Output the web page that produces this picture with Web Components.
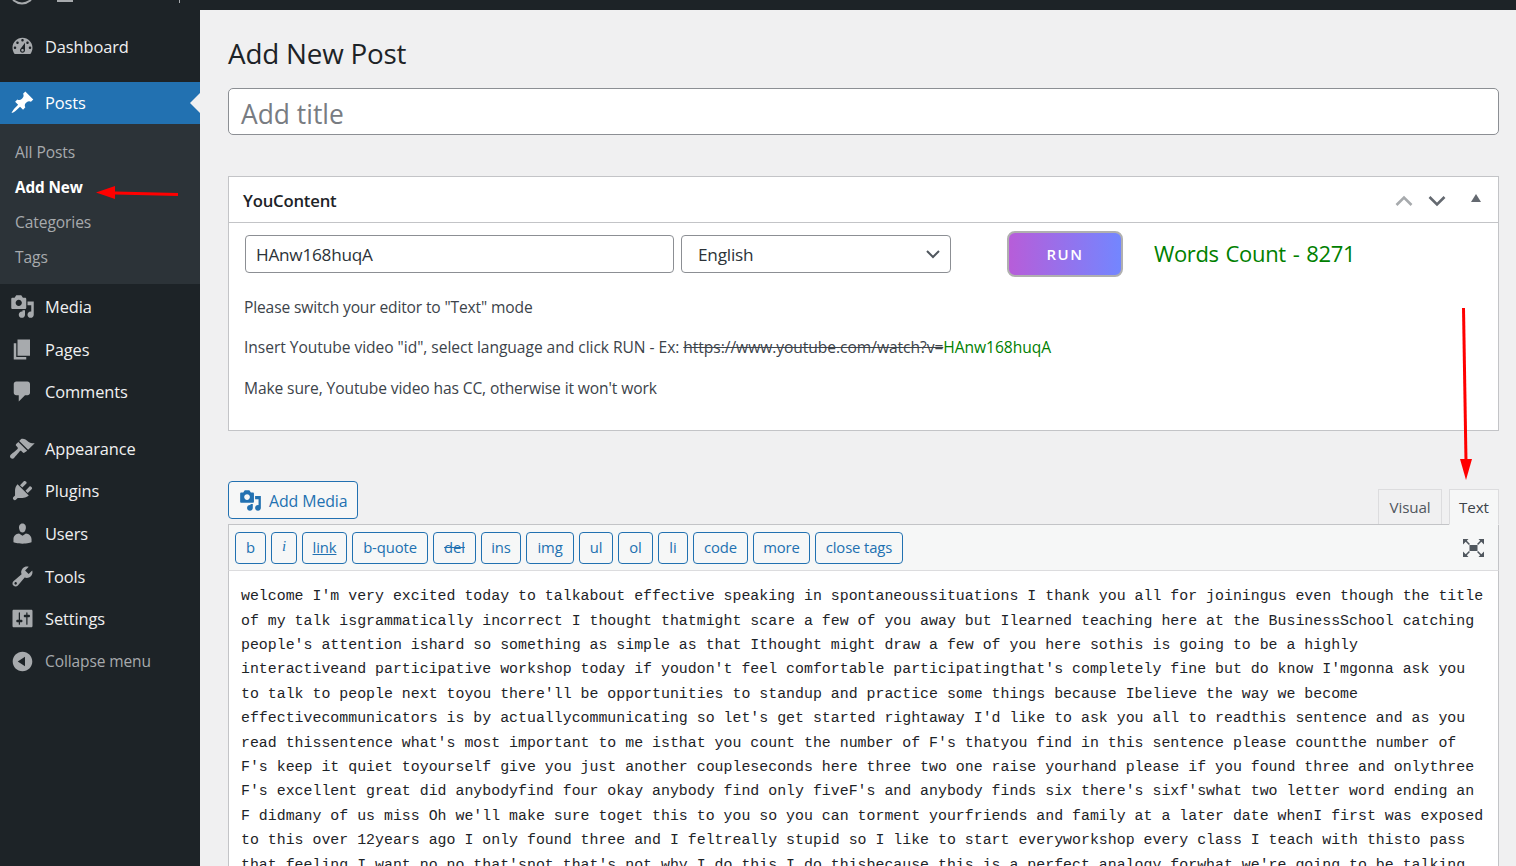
<!DOCTYPE html>
<html>
<head>
<meta charset="utf-8">
<title>Add New Post</title>
<style>
    html, body { margin: 0; height: 866px; overflow: hidden; background: #f0f0f1; }
    body { font-family: "Open Sans", "Liberation Sans", sans-serif; color: #3c434a; }
</style>
</head>
<body>
<wp-admin>
    <admin-menu slot="menu">
        <menu-item icon="dashboard">Dashboard</menu-item>
        <menu-item icon="pin" current gap>Posts</menu-item>
        <sub-menu>
            <sub-item>All Posts</sub-item>
            <sub-item active>Add New</sub-item>
            <sub-item>Categories</sub-item>
            <sub-item>Tags</sub-item>
        </sub-menu>
        <menu-item icon="media" nudge>Media</menu-item>
        <menu-item icon="pages">Pages</menu-item>
        <menu-item icon="comments">Comments</menu-item>
        <menu-item icon="appearance" gap>Appearance</menu-item>
        <menu-item icon="plugins">Plugins</menu-item>
        <menu-item icon="users">Users</menu-item>
        <menu-item icon="tools">Tools</menu-item>
        <menu-item icon="settings">Settings</menu-item>
        <menu-item icon="collapse" muted>Collapse menu</menu-item>
    </admin-menu>

    <page-title>Add New Post</page-title>
    <title-field>Add title</title-field>

    <you-content>
        <p style="letter-spacing:-0.15px">Please switch your editor to "Text" mode</p>
        <p style="letter-spacing:-0.05px">Insert Youtube video "id", select language and click RUN - Ex: <s>https://www.youtube.com/watch?v=</s><span style="color:#008000">HAnw168huqA</span></p>
        <p style="letter-spacing:-0.12px">Make sure, Youtube video has CC, otherwise it won't work</p>
    </you-content>

    <post-editor>
        <qt-button w="31">b</qt-button>
        <qt-button w="26" kind="i">i</qt-button>
        <qt-button w="45" kind="u">link</qt-button>
        <qt-button w="76">b-quote</qt-button>
        <qt-button w="43" kind="s">del</qt-button>
        <qt-button w="40">ins</qt-button>
        <qt-button w="48">img</qt-button>
        <qt-button w="34">ul</qt-button>
        <qt-button w="35">ol</qt-button>
        <qt-button w="30">li</qt-button>
        <qt-button w="55">code</qt-button>
        <qt-button w="57">more</qt-button>
        <qt-button w="88">close tags</qt-button>
        <div slot="text">welcome I'm very excited today to talkabout effective speaking in spontaneoussituations I thank you all for joiningus even though the title</div>
        <div slot="text">of my talk isgrammatically incorrect I thought thatmight scare a few of you away but Ilearned teaching here at the BusinessSchool catching</div>
        <div slot="text">people's attention ishard so something as simple as that Ithought might draw a few of you here sothis is going to be a highly</div>
        <div slot="text">interactiveand participative workshop today if youdon't feel comfortable participatingthat's completely fine but do know I'mgonna ask you</div>
        <div slot="text">to talk to people next toyou there'll be opportunities to standup and practice some things because Ibelieve the way we become</div>
        <div slot="text">effectivecommunicators is by actuallycommunicating so let's get started rightaway I'd like to ask you all to readthis sentence and as you</div>
        <div slot="text">read thissentence what's most important to me isthat you count the number of F's thatyou find in this sentence please countthe number of</div>
        <div slot="text">F's keep it quiet toyourself give you just another coupleseconds here three two one raise yourhand please if you found three and onlythree</div>
        <div slot="text">F's excellent great did anybodyfind four okay anybody find only fiveF's and anybody finds six there's sixf'swhat two letter word ending an</div>
        <div slot="text">F didmany of us miss Oh we'll make sure toget this to you so you can torment yourfriends and family at a later date whenI first was exposed</div>
        <div slot="text">to this over 12years ago I only found three and I feltreally stupid so I like to start everyworkshop every class I teach with thisto pass</div>
        <div slot="text">that feeling I want no no that'snot that's not why I do this I do thisbecause this is a perfect analogy forwhat we're going to be talking</div>
    </post-editor>

    <red-arrows slot="overlay"></red-arrows>
</wp-admin>

<script>
const ICONS = {
    dashboard: 'M3.76 16h12.48c1.1-1.37 1.76-3.11 1.76-5 0-4.42-3.58-8-8-8s-8 3.58-8 8c0 1.89.66 3.63 1.76 5zM10 4c.55 0 1 .45 1 1s-.45 1-1 1-1-.45-1-1 .45-1 1-1zM6 6c.55 0 1 .45 1 1s-.45 1-1 1-1-.45-1-1 .45-1 1-1zm8 0c.55 0 1 .45 1 1s-.45 1-1 1-1-.45-1-1 .45-1 1-1zm-5.37 5.55L12 7v6c0 1.1-.9 2-2 2s-2-.9-2-2c0-.57.24-1.08.63-1.45zM4 10c.55 0 1 .45 1 1s-.45 1-1 1-1-.45-1-1 .45-1 1-1zm12 0c.55 0 1 .45 1 1s-.45 1-1 1-1-.45-1-1 .45-1 1-1zm-5 3c0-.55-.45-1-1-1s-1 .45-1 1 .45 1 1 1 1-.45 1-1z',
    pin: 'M10.44 3.02l1.82-1.82 6.36 6.35-1.83 1.82c-1.05-.68-2.48-.57-3.41.36l-.75.75c-.92.93-1.04 2.35-.35 3.41l-1.83 1.82-2.41-2.41-2.8 2.79c-.42.42-3.38 2.71-3.8 2.29s1.86-3.39 2.28-3.81l2.79-2.79L4.1 9.36l1.83-1.82c1.05.69 2.48.57 3.4-.36l.75-.75c.93-.92 1.05-2.35.36-3.41z',
    media: 'M13 11V4c0-.55-.45-1-1-1h-1.67L9 1H5L3.67 3H2c-.55 0-1 .45-1 1v7c0 .55.45 1 1 1h10c.55 0 1-.45 1-1zM7 4.5c1.38 0 2.5 1.12 2.5 2.5S8.38 9.5 7 9.5 4.5 8.38 4.5 7 5.62 4.5 7 4.5zM14 6h5v10.5c0 1.38-1.12 2.5-2.5 2.5S14 17.88 14 16.5s1.12-2.5 2.5-2.5c.17 0 .34.02.5.05V9h-3V6zm-4 8.05V13h2v3.5c0 1.38-1.12 2.5-2.5 2.5S7 17.88 7 16.5 8.12 14 9.5 14c.17 0 .34.02.5.05z',
    pages: 'M6 15V2h10v13H6zm-1 1h8v2H3V5h2v11z',
    comments: 'M5 2h9c1.1 0 2 .9 2 2v7c0 1.1-.9 2-2 2h-2l-5 5v-5H5c-1.1 0-2-.9-2-2V4c0-1.1.9-2 2-2z',
    appearance: 'M14.48 11.06L7.41 3.99l1.5-1.5c.5-.56 2.3-.47 3.51.32 1.21.8 1.43 1.28 2.91 2.1 1.18.64 2.45 1.26 4.45.85zm-.71.71L6.7 4.7 4.93 6.47c-.39.39-.39 1.02 0 1.41l1.06 1.06c.39.39.39 1.03 0 1.42-.6.6-5.4 4.55-5.4 4.55-.78.66-.78 1.9 0 2.65.8.79 1.98.76 2.68 0 0 0 3.95-4.79 4.55-5.4.39-.39 1.02-.39 1.41 0l1.06 1.06c.39.39 1.02.39 1.41 0z',
    plugins: 'M13.11 4.36L9.87 7.6 8 5.73l3.24-3.24c.35-.34 1.05-.2 1.56.32.52.51.66 1.21.31 1.55zm-8 1.77l.91-1.12 9.01 9.01-1.19.84c-.71.71-2.63 1.16-3.82 1.16H6.14L4.9 17.26c-.59.59-1.54.59-2.12 0-.59-.58-.59-1.53 0-2.12l1.24-1.24v-3.88c0-1.13.4-3.19 1.09-3.89zm7.26 3.97l3.24-3.24c.34-.35 1.04-.21 1.55.31.52.51.66 1.21.31 1.55l-3.24 3.25z',
    users: 'M10 9.25c-2.27 0-2.73-3.44-2.73-3.44C7 4.02 7.82 2 9.97 2c2.16 0 2.98 2.02 2.71 3.81 0 0-.41 3.44-2.68 3.44zm0 2.57L12.72 10c2.39 0 4.52 2.33 4.52 4.53v2.49s-3.65 1.13-7.24 1.13c-3.65 0-7.24-1.13-7.24-1.13v-2.49c0-2.25 1.94-4.48 4.47-4.48z',
    tools: 'M16.68 9.77c-1.34 1.34-3.3 1.67-4.95.99l-5.41 6.52c-.99.99-2.59.99-3.58 0s-.99-2.59 0-3.57l6.52-5.42c-.68-1.65-.35-3.61.99-4.95 1.28-1.28 3.12-1.62 4.72-1.06l-2.89 2.89 2.82 2.82 2.86-2.87c.53 1.58.18 3.39-1.08 4.65zM3.81 16.21c.4.39 1.04.39 1.43 0 .4-.4.4-1.04 0-1.43-.39-.4-1.03-.4-1.43 0-.39.39-.39 1.03 0 1.43z',
    settings: 'M18 16V4c0-.55-.45-1-1-1H3c-.55 0-1 .45-1 1v12c0 .55.45 1 1 1h14c.55 0 1-.45 1-1zM8 11h1c.55 0 1 .45 1 1s-.45 1-1 1H8v1.5c0 .28-.22.5-.5.5s-.5-.22-.5-.5V13H6c-.55 0-1-.45-1-1s.45-1 1-1h1V5.5c0-.28.22-.5.5-.5s.5.22.5.5V11zm5-2h-1c-.55 0-1-.45-1-1s.45-1 1-1h1V5.5c0-.28.22-.5.5-.5s.5.22.5.5V7h1c.55 0 1 .45 1 1s-.45 1-1 1h-1v5.5c0 .28-.22.5-.5.5s-.5-.22-.5-.5V9z',
    collapse: 'M10 2.16c4.33 0 7.84 3.51 7.84 7.84s-3.51 7.84-7.84 7.84S2.16 14.33 2.16 10 5.71 2.16 10 2.16zm2 11.72V6.12L6.18 9.97z'
};

class WpAdmin extends HTMLElement {
    constructor() {
        super();
        this.attachShadow({ mode: 'open' });
        this.shadowRoot.innerHTML = `
            <style>
                :host {
                    display: grid;
                    grid-template-columns: 200px 1fr;
                    grid-template-rows: 10px 1fr;
                    height: 866px;
                    overflow: hidden;
                    position: relative;
                }

                .bar {
                    grid-column: 1 / 3;
                    background: #1d2327;
                    position: relative;
                    overflow: hidden;
                }

                .bar svg {
                    position: absolute;
                    left: 0;
                    top: 0;
                }

                .side {
                    background: #1d2327;
                }

                .wrap {
                    padding: 23px 17px 0 28px;
                    min-width: 0;
                    overflow: hidden;
                }
            </style>
            <div class="bar">
                <svg width="200" height="10">
                    <path d="M13 0q9 7 18 0" fill="none" stroke="#a7aaad" stroke-width="2"/>
                    <rect x="57" y="0" width="16" height="2" fill="#a7aaad"/>
                    <rect x="179" y="0" width="1" height="3" fill="#a7aaad"/>
                </svg>
            </div>
            <div class="side"><slot name="menu"></slot></div>
            <div class="wrap"><slot></slot></div>
            <slot name="overlay"></slot>
        `;
    }
}

class AdminMenu extends HTMLElement {
    constructor() {
        super();
        this.attachShadow({ mode: 'open' });
        this.shadowRoot.innerHTML = `
            <style>
                :host {
                    display: block;
                    padding-top: 15.4px;
                    font-size: 16.4px;
                    letter-spacing: -0.1px;
                }
            </style>
            <slot></slot>
        `;
    }
}

class MenuItem extends HTMLElement {
    constructor() {
        super();
        this.attachShadow({ mode: 'open' });
    }

    connectedCallback() {
        const d = ICONS[this.getAttribute('icon')] || '';
        this.shadowRoot.innerHTML = `
            <style>
                :host {
                    display: flex;
                    align-items: center;
                    height: 42.6px;
                    color: #f0f0f1;
                    position: relative;
                }

                :host([gap]) {
                    margin-top: 14px;
                }

                :host([nudge]) {
                    margin-top: 1.2px;
                }

                :host([current]) {
                    background: #2271b1;
                    color: #fff;
                    height: 42px;
                }

                :host([muted]) {
                    color: #a7aaad;
                    font-size: 15.5px;
                }

                svg {
                    width: 25px;
                    height: 25px;
                    margin: 0 10px 0 10px;
                    fill: #a7aaad;
                    fill-rule: evenodd;
                    flex: none;
                }

                :host([current]) svg {
                    fill: #fff;
                }

                :host([current])::after {
                    content: "";
                    position: absolute;
                    right: 0;
                    top: 50%;
                    margin-top: -10px;
                    border: 10px solid transparent;
                    border-right-color: #f0f0f1;
                    border-left-width: 0;
                }
            </style>
            <svg viewBox="0 0 20 20"><path d="${d}"/></svg>
            <slot></slot>
        `;
    }
}

class SubMenu extends HTMLElement {
    constructor() {
        super();
        this.attachShadow({ mode: 'open' });
        this.shadowRoot.innerHTML = `
            <style>
                :host {
                    display: block;
                    background: #2c3338;
                    padding: 11px 0 9px;
                    font-size: 15.6px;
                }
            </style>
            <slot></slot>
        `;
    }
}

class SubItem extends HTMLElement {
    constructor() {
        super();
        this.attachShadow({ mode: 'open' });
        this.shadowRoot.innerHTML = `
            <style>
                :host {
                    display: flex;
                    align-items: center;
                    height: 35px;
                    padding-left: 15px;
                    color: #a7aaad;
                }

                :host([active]) {
                    color: #fff;
                    font-weight: 700;
                    font-size: 15.3px;
                }
            </style>
            <slot></slot>
        `;
    }
}

class PageTitle extends HTMLElement {
    constructor() {
        super();
        this.attachShadow({ mode: 'open' });
        this.shadowRoot.innerHTML = `
            <style>
                :host {
                    display: block;
                    height: 42px;
                    line-height: 40px;
                    margin-bottom: 13px;
                    font-size: 27.8px;
                    letter-spacing: -0.2px;
                    color: #1d2327;
                }
            </style>
            <slot></slot>
        `;
    }
}

class TitleField extends HTMLElement {
    constructor() {
        super();
        this.attachShadow({ mode: 'open' });
        this.shadowRoot.innerHTML = `
            <style>
                :host {
                    display: flex;
                    align-items: center;
                    box-sizing: border-box;
                    height: 47px;
                    padding: 4px 0 0 12px;
                    background: #fff;
                    border: 1px solid #8c8f94;
                    border-radius: 5px;
                    font-size: 26.4px;
                    color: #787c82;
                }
            </style>
            <slot></slot>
        `;
    }
}

class YouContent extends HTMLElement {
    constructor() {
        super();
        this.attachShadow({ mode: 'open' });
        this.shadowRoot.innerHTML = `
            <style>
                :host {
                    display: block;
                    box-sizing: border-box;
                    height: 255px;
                    margin-top: 41px;
                    background: #fff;
                    border: 1px solid #c3c4c7;
                }

                .head {
                    display: flex;
                    align-items: center;
                    box-sizing: border-box;
                    height: 46px;
                    padding: 2px 17px 0 14px;
                    border-bottom: 1px solid #c3c4c7;
                    font-size: 16.7px;
                    font-weight: 600;
                    letter-spacing: -0.2px;
                    color: #1d2327;
                }

                .head b {
                    flex: 1;
                    font-weight: 600;
                }

                .head svg {
                    display: block;
                    fill: none;
                    stroke-width: 2.6;
                }

                .row {
                    display: flex;
                    align-items: center;
                    height: 46px;
                    margin: 8px 0 19.5px 16px;
                    font-size: 17.2px;
                    color: #2c3338;
                }

                .field {
                    display: flex;
                    align-items: center;
                    box-sizing: border-box;
                    height: 38px;
                    padding: 1px 10px 0;
                    border: 1px solid #8c8f94;
                    border-radius: 4px;
                }

                .id {
                    width: 429px;
                    letter-spacing: -0.25px;
                }

                .lang {
                    width: 270px;
                    margin-left: 7px;
                    padding: 0 10px 0 16px;
                    justify-content: space-between;
                    letter-spacing: -0.2px;
                }

                .run {
                    display: flex;
                    align-items: center;
                    justify-content: center;
                    box-sizing: border-box;
                    width: 116px;
                    height: 46px;
                    margin-left: 56px;
                    border: 2px solid #b0b0b0;
                    border-radius: 8px;
                    background: linear-gradient(90deg, #b75dd9, #7386ff);
                    color: #fff;
                    font-size: 15px;
                    font-weight: 600;
                    letter-spacing: 1.5px;
                }

                .count {
                    margin: -2px 0 0 31px;
                    font-size: 22px;
                    color: #008000;
                    letter-spacing: -0.35px;
                    word-spacing: 1.5px;
                }

                .notes {
                    padding-left: 15px;
                    font-size: 15.6px;
                    line-height: 21px;
                    color: #3c434a;
                }

                ::slotted(p) {
                    margin: 0 0 19.5px;
                }
            </style>
            <div class="head">
                <b>YouContent</b>
                <svg width="18" height="12" viewBox="0 0 18 12" style="margin-right:15px;stroke:#a7aaad"><path d="M1.5 10l7.5-7.5 7.5 7.5"/></svg>
                <svg width="18" height="12" viewBox="0 0 18 12" style="margin-right:25px;stroke:#646970"><path d="M1.5 2l7.500 7.500 7.500-7.500"/></svg>
                <svg width="10" height="8" viewBox="0 0 10 8" style="margin-top:-5px"><path d="M5 0l5 8H0z" style="fill:#646970;stroke:none"/></svg>
            </div>
            <div class="row">
                <div class="field id">HAnw168huqA</div>
                <div class="field lang">English
                    <svg width="14" height="9" viewBox="0 0 14 9" fill="none" stroke="#50575e" stroke-width="2"><path d="M1 1l6 6 6-6"/></svg>
                </div>
                <div class="run">RUN</div>
                <div class="count">Words Count - 8271</div>
            </div>
            <div class="notes"><slot></slot></div>
        `;
    }
}

class QtButton extends HTMLElement {
    constructor() {
        super();
        this.attachShadow({ mode: 'open' });
    }

    connectedCallback() {
        const width = this.getAttribute('w');
        this.shadowRoot.innerHTML = `
            <style>
                :host {
                    display: flex;
                    align-items: center;
                    justify-content: center;
                    box-sizing: border-box;
                    width: ${width}px;
                    height: 32px;
                    padding-bottom: 2px;
                    background: #f6f7f7;
                    border: 1px solid #2271b1;
                    border-radius: 4px;
                    color: #2271b1;
                    font-size: 14.8px;
                    letter-spacing: -0.1px;
                }

                :host([kind="i"]) {
                    font-family: "Liberation Serif", serif;
                    font-style: italic;
                }

                :host([kind="u"]) {
                    text-decoration: underline;
                }

                :host([kind="s"]) {
                    text-decoration: line-through;
                }
            </style>
            <slot></slot>
        `;
    }
}

class PostEditor extends HTMLElement {
    constructor() {
        super();
        this.attachShadow({ mode: 'open' });
        this.shadowRoot.innerHTML = `
            <style>
                :host {
                    display: block;
                    margin-top: 50px;
                }

                .tools {
                    display: flex;
                    align-items: flex-end;
                    justify-content: space-between;
                    height: 43px;
                }

                .media {
                    display: flex;
                    align-items: center;
                    gap: 7px;
                    align-self: flex-start;
                    box-sizing: border-box;
                    width: 130px;
                    height: 38px;
                    padding: 1px 0 0 10px;
                    background: #f6f7f7;
                    border: 1px solid #2271b1;
                    border-radius: 4px;
                    color: #2271b1;
                    font-size: 15.9px;
                    letter-spacing: -0.1px;
                }

                .media svg {
                    width: 23px;
                    height: 23px;
                    fill: #2271b1;
                }

                .tabs {
                    display: flex;
                    gap: 7px;
                    position: relative;
                    z-index: 1;
                }

                .tab {
                    display: flex;
                    align-items: center;
                    justify-content: center;
                    box-sizing: border-box;
                    height: 36px;
                    margin-bottom: -1px;
                    border: 1px solid #dcdcde;
                    background: #f0f0f1;
                    color: #50575e;
                    font-size: 15.2px;
                    letter-spacing: -0.1px;
                }

                .tab.visual {
                    width: 64px;
                    height: 35px;
                    margin-bottom: 0;
                    border-bottom: 0;
                }

                .tab.on {
                    width: 50px;
                    background: #f6f7f7;
                    border-bottom-color: #f6f7f7;
                    color: #3c434a;
                }

                .quick {
                    display: flex;
                    align-items: center;
                    gap: 5px;
                    box-sizing: border-box;
                    height: 47px;
                    padding: 0 14px 0 6px;
                    background: #f6f7f7;
                    border: 1px solid #c3c4c7;
                    border-bottom-color: #dcdcde;
                }

                .quick svg {
                    margin-left: auto;
                }

                .text {
                    padding: 13.2px 0 0 12px;
                    background: #fff;
                    border: 1px solid #c3c4c7;
                    border-width: 0 1px;
                    height: 320px;
                    overflow: hidden;
                    font-family: "Liberation Mono", monospace;
                    font-size: 14.9px;
                    line-height: 24.4px;
                    color: #1d2327;
                    white-space: pre;
                }
            </style>
            <div class="tools">
                <div class="media">
                    <svg viewBox="0 0 20 20"><path fill-rule="evenodd" d="${ICONS.media}"/></svg>
                    Add Media
                </div>
                <div class="tabs">
                    <div class="tab visual">Visual</div>
                    <div class="tab on">Text</div>
                </div>
            </div>
            <div class="quick">
                <slot></slot>
                <svg width="21" height="18" viewBox="0 0 21 18" fill="#50575e">
                    <rect x="6.500" y="6" width="8" height="6"/>
                    <path d="M0 0h5.500L3.800 1.700 7 4.900 5.900 6 2.700 2.800 0 5.500zM21 0h-5.500l1.700 1.700L14 4.900 15.100 6l3.200-3.200L21 5.500zM0 18h5.500l-1.700-1.700L7 13.100 5.900 12l-3.200 3.200L0 12.500zM21 18h-5.500l1.700-1.700-3.200-3.200L15.100 12l3.200 3.200 2.700-2.700z"/>
                </svg>
            </div>
            <div class="text"><slot name="text"></slot></div>
        `;
    }
}

class RedArrows extends HTMLElement {
    constructor() {
        super();
        this.attachShadow({ mode: 'open' });
        this.shadowRoot.innerHTML = `
            <style>
                :host {
                    position: absolute;
                    left: 0;
                    top: 0;
                    width: 1516px;
                    height: 866px;
                    pointer-events: none;
                }

                svg {
                    display: block;
                }
            </style>
            <svg width="1516" height="866" fill="#f00">
                <path d="M178 194.500L115 193" stroke="#f00" stroke-width="3"/>
                <path d="M96 192.500L115 186v13z"/>
                <path d="M1463.500 308L1466 462" stroke="#f00" stroke-width="3"/>
                <path d="M1460 459h12l-6 21z"/>
            </svg>
        `;
    }
}

customElements.define('wp-admin', WpAdmin);
customElements.define('admin-menu', AdminMenu);
customElements.define('menu-item', MenuItem);
customElements.define('sub-menu', SubMenu);
customElements.define('sub-item', SubItem);
customElements.define('page-title', PageTitle);
customElements.define('title-field', TitleField);
customElements.define('you-content', YouContent);
customElements.define('qt-button', QtButton);
customElements.define('post-editor', PostEditor);
customElements.define('red-arrows', RedArrows);
</script>
</body>
</html>
